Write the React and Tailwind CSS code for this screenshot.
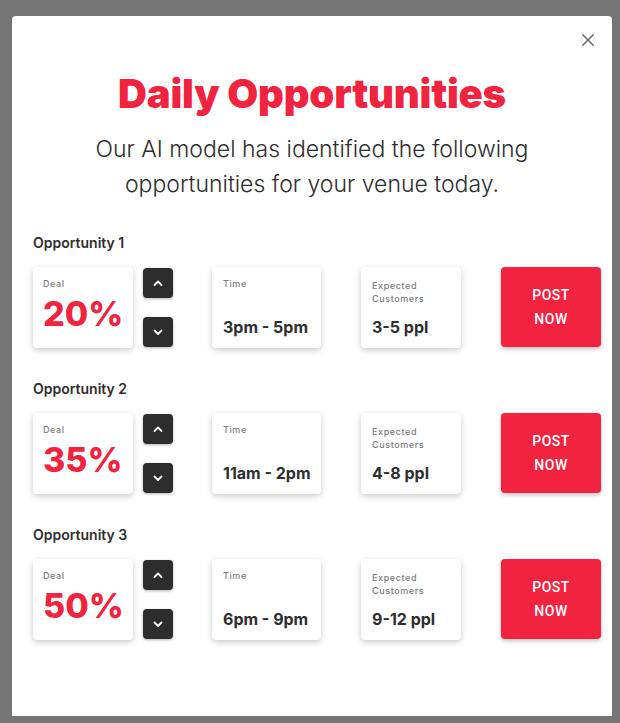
import React, { useState } from "react";

const initial = [
  { id: 1, deal: 20, time: "3pm - 5pm", customers: "3-5 ppl" },
  { id: 2, deal: 35, time: "11am - 2pm", customers: "4-8 ppl" },
  { id: 3, deal: 50, time: "6pm - 9pm", customers: "9-12 ppl" },
];

function Chevron({ up }) {
  return (
    <svg width="12" height="12" viewBox="0 0 12 12" fill="none">
      <path
        d={up ? "M2.5 8 L6 4.5 L9.5 8" : "M2.5 4.5 L6 8 L9.5 4.5"}
        stroke="white"
        strokeWidth="1.8"
        strokeLinecap="round"
        strokeLinejoin="round"
      />
    </svg>
  );
}

function OpportunityRow({ opp, onChange }) {
  return (
    <div className="mb-[32px]">
      <h3 className="mb-[15px] text-[14px] font-semibold leading-[18px] text-[#2e2e2e]">
        Opportunity {opp.id}
      </h3>
      <div className="flex items-stretch">
        {/* Deal card */}
        <div className="flex h-[81px] w-[100px] flex-col rounded-[4px] bg-white px-[10px] pt-[12px] shadow-[0_2px_6px_rgba(0,0,0,0.22)]">
          <span className="text-[9px] font-medium leading-[10px] tracking-[0.6px] text-[#7a7a7a]">
            Deal
          </span>
          <span className="mt-[6px] text-[34px] font-extrabold leading-[38px] text-[#f1233f]">
            {opp.deal}%
          </span>
        </div>

        {/* Up / down */}
        <div className="ml-[10px] flex flex-col justify-between py-[1px]">
          <button
            onClick={() => onChange(opp.id, 5)}
            className="flex h-[30px] w-[30px] items-center justify-center rounded-[4px] bg-[#2d2d2d] shadow-[0_1px_3px_rgba(0,0,0,0.3)]"
          >
            <Chevron up />
          </button>
          <button
            onClick={() => onChange(opp.id, -5)}
            className="flex h-[30px] w-[30px] items-center justify-center rounded-[4px] bg-[#2d2d2d] shadow-[0_1px_3px_rgba(0,0,0,0.3)]"
          >
            <Chevron />
          </button>
        </div>

        {/* Time card */}
        <div className="ml-[39px] flex h-[81px] w-[109px] flex-col justify-between rounded-[4px] bg-white pb-[11px] pl-[11px] pr-[4px] pt-[12px] shadow-[0_2px_6px_rgba(0,0,0,0.22)]">
          <span className="text-[9px] font-medium leading-[10px] tracking-[0.6px] text-[#7a7a7a]">
            Time
          </span>
          <span className="whitespace-nowrap text-[16px] font-bold leading-[20px] text-[#2e2e2e]">
            {opp.time}
          </span>
        </div>

        {/* Customers card */}
        <div className="ml-[40px] flex h-[81px] w-[100px] flex-col justify-between rounded-[4px] bg-white pb-[11px] pl-[11px] pr-[4px] pt-[12px] shadow-[0_2px_6px_rgba(0,0,0,0.22)]">
          <span className="text-[9px] font-medium leading-[13px] tracking-[0.6px] text-[#7a7a7a]">
            Expected
            <br />
            Customers
          </span>
          <span className="whitespace-nowrap text-[16px] font-bold leading-[20px] text-[#2e2e2e]">
            {opp.customers}
          </span>
        </div>

        {/* Post button */}
        <button className="ml-[40px] flex h-[80px] w-[100px] flex-col items-center justify-center rounded-[4px] bg-[#f1233f] font-['Roboto',sans-serif] text-[14px] font-medium leading-[24px] tracking-[0.5px] text-white shadow-[0_2px_4px_rgba(0,0,0,0.25)]">
          <span>POST</span>
          <span>NOW</span>
        </button>
      </div>
    </div>
  );
}

export default function App() {
  const [opps, setOpps] = useState(initial);

  const handleChange = (id, delta) => {
    setOpps(
      opps.map((o) =>
        o.id === id
          ? { ...o, deal: Math.min(100, Math.max(0, o.deal + delta)) }
          : o
      )
    );
  };

  return (
    <div className="min-h-[723px] bg-[#757575] pl-[12px] pr-[8px] pt-[16px] font-['Inter',sans-serif]">
      <div className="relative h-[700px] w-[600px] rounded-t-[4px] bg-white pl-[21px] pr-[11px]">
        <button className="absolute right-[17px] top-[17px] flex h-[14px] w-[14px] items-center justify-center">
          <svg width="16" height="16" viewBox="0 0 16 16" fill="none">
            <path
              d="M2 2 L14 14 M14 2 L2 14"
              stroke="#6b6b6b"
              strokeWidth="1.8"
              strokeLinecap="round"
            />
          </svg>
        </button>

        <div className="pr-[10px] pt-[56px] text-center">
          <h1 className="text-[40px] font-black leading-[44px] tracking-[-0.2px] text-[#f1233f]">
            Daily Opportunities
          </h1>
          <p className="mx-auto mt-[16px] w-[460px] text-[23px] font-light leading-[35px] text-[#2e2e2e]">
            Our AI model has identified the following opportunities for your
            venue today.
          </p>
        </div>

        <div className="mt-[32px]">
          {opps.map((opp) => (
            <OpportunityRow key={opp.id} opp={opp} onChange={handleChange} />
          ))}
        </div>
      </div>
    </div>
  );
}
